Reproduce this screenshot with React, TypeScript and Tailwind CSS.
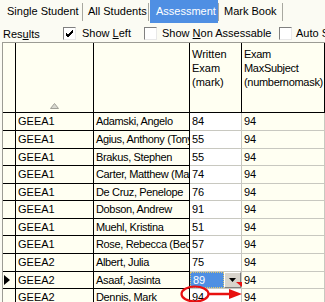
const font = "font-['Liberation_Sans',Arial,sans-serif]"

const rows: [string, string, string][] = [
  ['GEEA1', 'Adamski, Angelo', '84'],
  ['GEEA1', 'Agius, Anthony (Tony)', '55'],
  ['GEEA1', 'Brakus, Stephen', '55'],
  ['GEEA1', 'Carter, Matthew (Matt)', '74'],
  ['GEEA1', 'De Cruz, Penelope', '76'],
  ['GEEA1', 'Dobson, Andrew', '91'],
  ['GEEA1', 'Muehl, Kristina', '51'],
  ['GEEA1', 'Rose, Rebecca (Becky)', '57'],
  ['GEEA2', 'Albert, Julia', '75'],
  ['GEEA2', 'Asaaf, Jasinta', '89'],
  ['GEEA2', 'Dennis, Mark', '94'],
]

const heights = [
  'h-[18px]', 'h-[18px]', 'h-[17px]', 'h-[18px]', 'h-[17px]', 'h-[18px]',
  'h-[17px]', 'h-[18px]', 'h-[18px]', 'h-[17px]', 'h-[18px]',
]

function Checkbox({ checked }: { checked?: boolean }) {
  return (
    <span className="shrink-0 w-[13px] h-[13px] bg-white border border-t-[#808080] border-l-[#808080] border-r-[#e8e8e8] border-b-[#e8e8e8] flex items-center justify-center">
      {checked && (
        <svg width="9" height="9" viewBox="0 0 9 9">
          <path d="M1 4 L3 6 L8 1 M1 5 L3 7 L8 2 M1 6 L3 8 L8 3" stroke="#000" strokeWidth="1" fill="none" />
        </svg>
      )}
    </span>
  )
}

function Tab({ label, w, pl, active }: { label: string; w: string; pl: string; active?: boolean }) {
  return (
    <div className={`${w} ${pl} shrink-0 h-[23px] flex items-center ${active ? 'bg-[#4f8fe3] text-white' : 'text-black'}`}>
      {label}
    </div>
  )
}

function Sep() {
  return <div className="shrink-0 w-px h-[18px] mt-[3px] bg-[#a8a8a0]" />
}

export default function App() {
  return (
    <div className={`${font} w-[325px] h-[302px] overflow-hidden bg-[#fbfbf3] text-[11px] text-black relative`}>
      {/* tabs */}
      <div className="flex h-[24px] whitespace-nowrap">
        <Tab label="Single Student" w="w-[82px]" pl="pl-[7px]" />
        <Sep />
        <Tab label="All Students" w="w-[65px]" pl="pl-[5px]" />
        <Sep />
        <div className="w-px shrink-0" />
        <Tab label="Assessment" w="w-[68px]" pl="pl-[6px]" active />
        <Sep />
        <Tab label="Mark Book" w="w-[63px]" pl="pl-[5px]" />
        <Sep />
      </div>

      {/* options */}
      <div className="flex items-center h-[18px] whitespace-nowrap overflow-hidden">
        <span className="shrink-0 pl-[3px] w-[63px] pt-[3px]">
          Res<span className="underline">u</span>lts
        </span>
        <Checkbox checked />
        <span className="shrink-0 pl-[6px] w-[68px]">
          Show <span className="underline">L</span>eft
        </span>
        <Checkbox />
        <span className="shrink-0 pl-[5px] w-[122px]">
          Show <span className="underline">N</span>on Assessable
        </span>
        <Checkbox />
        <span className="shrink-0 pl-[4px]">Auto Save</span>
      </div>

      {/* grid */}
      <div className="ml-[2px] border-t border-l border-[#9c9c94] text-[11px]">
        {/* header */}
        <div className="flex h-[70px] border-b border-black bg-[#fffff2]">
          <div className="w-[13px] border-r border-black" />
          <div className="w-[78px] border-r border-black flex items-end justify-center pb-[3px]">
            <svg width="9" height="6" viewBox="0 0 9 6">
              <path d="M0.5 5.5 L4.5 0.5 L8.5 5.5 Z" fill="#d8d8d0" stroke="#a0a098" strokeWidth="1" />
            </svg>
          </div>
          <div className="w-[96px] border-r border-black" />
          <div className="w-[52px] border-r border-black pl-[2px] pt-[4px] leading-[14px]">
            Written<br />Exam<br />(mark)
          </div>
          <div className="w-[83px] border-r border-black pl-[2px] pt-[4px] leading-[14px] tracking-[-0.3px] whitespace-nowrap overflow-hidden">
            Exam<br />MaxSubject<br />(numbernomask)
          </div>
        </div>

        {rows.map(([cls, name, mark], i) => {
          const selected = i === 9
          return (
            <div key={i} className={`flex ${heights[i]}`}>
              <div className="w-[13px] border-r border-b border-black bg-[#fffff2] flex items-center pl-[1px]">
                {selected && (
                  <svg width="6" height="10" viewBox="0 0 6 10">
                    <path d="M0 0 L6 5 L0 10 Z" fill="#000" />
                  </svg>
                )}
              </div>
              <div className="w-[78px] border-r border-b border-black bg-[#fffff2] pl-[2px] flex items-center whitespace-nowrap overflow-hidden">
                {cls}
              </div>
              <div className="w-[96px] border-r border-b border-black bg-[#fffff2] pl-[2px] flex items-center whitespace-nowrap overflow-hidden tracking-[-0.35px]">
                {name}
              </div>
              {selected ? (
                <div className="w-[52px] border-r border-b border-[#c8c8c0] bg-white flex items-stretch">
                  <div className="w-[34px] bg-[#4f8fe3] text-white pl-[2px] flex items-center border border-dotted border-[#e0c870]">
                    {mark}
                  </div>
                  <div className="w-[17px] bg-[#d8d4cc] border border-t-white border-l-white border-r-[#808080] border-b-[#808080] flex items-center justify-center">
                    <svg width="7" height="4" viewBox="0 0 7 4">
                      <path d="M0 0 L7 0 L3.5 4 Z" fill="#000" />
                    </svg>
                  </div>
                </div>
              ) : (
                <div className="w-[52px] border-r border-b border-[#c8c8c0] bg-white pl-[2px] flex items-center">
                  {mark}
                </div>
              )}
              <div className="w-[83px] border-r border-b border-[#c8c8c0] bg-[#fffff2] pl-[2px] flex items-center">
                94
              </div>
            </div>
          )
        })}
      </div>

      {/* red annotation */}
      <svg className="absolute left-0 top-0 pointer-events-none" width="325" height="302" viewBox="0 0 325 302">
        <ellipse cx="195" cy="294" rx="13.5" ry="7.5" fill="none" stroke="#e81010" strokeWidth="2.2" />
        <path d="M208 294 L232 294" stroke="#e81010" strokeWidth="2.5" />
        <path d="M229 289 L242 294 L229 299 Z" fill="#e81010" />
        <path d="M236 282 L242 282 L242 287 Z" fill="#e81010" />
      </svg>
    </div>
  )
}
